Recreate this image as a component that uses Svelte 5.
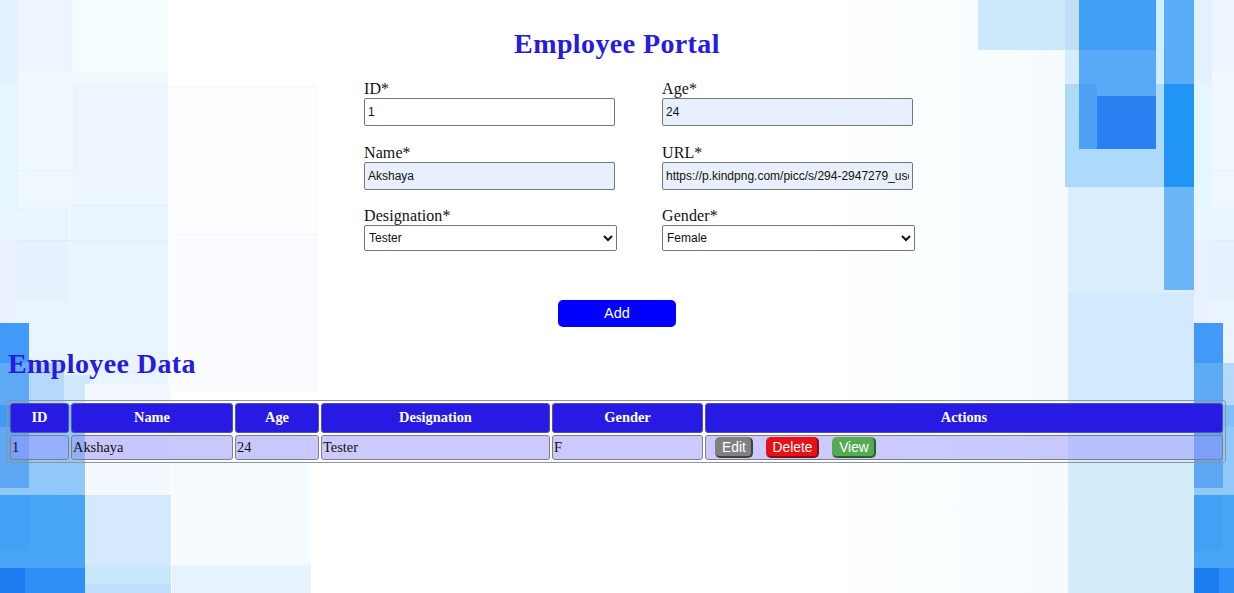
<script>
  const tile = [
    [0, 0, 18, 82, '#e3f1ff'], [18, 0, 54, 74, '#edf6ff'], [72, 0, 96, 72, '#f6fdff'],
    [18, 72, 150, 10, '#f3f7fe'], [72, 82, 96, 158, '#edf5ff'],
    [0, 82, 18, 125, '#e6f6ff'], [18, 82, 54, 125, '#eff8ff'],
    [0, 207, 72, 33, '#e9f5ff'], [0, 240, 168, 83, '#e9f4ff'], [14, 240, 51, 60, '#e5f2fe'],
    [72, 204, 96, 38, '#ebf5ff'], [0, 240, 14, 83, '#e9f0ff'],
    [0, 323, 168, 82, '#e9f4ff'],
    [168, 84, 148, 308, '#fcfdff'], [174, 234, 143, 158, '#fafcff'],
    [29, 363, 35, 42, '#b6d9fa'], [64, 375, 26, 30, '#cfe8fc'],
    [85, 384, 86, 111, '#f4f9ff'], [172, 405, 139, 160, '#f6fbff'],
    [29, 405, 56, 22, '#80bff8'], [29, 427, 56, 68, '#91c8fa'], [0, 488, 29, 7, '#91c8fa'],
    [0, 323, 29, 40, '#4399f8'], [0, 363, 29, 42, '#5faaf5'],
    [0, 405, 29, 22, '#439af3'], [0, 427, 29, 61, '#5ea8f3'],
    [0, 495, 85, 73, '#49a6f7'], [0, 495, 29, 56, '#43a0f5'],
    [0, 568, 85, 25, '#2e90f6'], [0, 568, 25, 25, '#1c7bf0'],
    [85, 495, 86, 70, '#d4e8fe'], [85, 565, 86, 19, '#c7e8fb'], [85, 584, 86, 9, '#bedffe'],
    [172, 565, 139, 28, '#e6f3fe'],
    [978, 0, 88, 50, '#cde8fa'], [1065, 0, 14, 50, '#c0dff5'], [1065, 50, 14, 34, '#d4ecfd'],
    [1155, 0, 9, 84, '#cfedfd'],
    [1065, 84, 99, 103, '#add9fb'], [1065, 84, 14, 31, '#addbf6'],
    [1079, 0, 77, 50, '#409ff5'], [1079, 50, 77, 99, '#59aaf6'], [1079, 84, 18, 65, '#4ea2f5'],
    [1097, 96, 59, 53, '#2b80f1'],
    [1068, 187, 126, 106, '#daeffd'], [1068, 293, 126, 107, '#d2e9fe'], [1068, 400, 126, 193, '#d5ecfb'],
    [1164, 0, 30, 84, '#59acf7'], [1164, 84, 30, 103, '#2095f5'], [1164, 187, 30, 103, '#6cb5f6']
  ];

  const seams = [
    'M168 87.500H316.500V234.500H174', 'M316.500 234V392H174', 'M17 170.500H75M17 209.500H66V300',
    'M17 240.500H168M72 205.500H168M75 82V170', 'M72 0V72', 'M32 370V400M64 405V568'
  ];

  let employee = $state({
    id: '1', age: '24', name: 'Akshaya',
    url: 'https://p.kindpng.com/picc/s/294-2947279_user-icon.png',
    designation: 'Tester', gender: 'Female'
  });
  const rows = [{ id: 1, name: 'Akshaya', age: 24, designation: 'Tester', gender: 'F' }];
</script>

<svg class="backdrop" width="1234" height="593" viewBox="0 0 1234 593" aria-hidden="true">
  <defs>
    <linearGradient id="fade" x1="0" x2="1">
      <stop offset="0" stop-color="#fff" />
      <stop offset="0.4" stop-color="#f8fdff" />
      <stop offset="1" stop-color="#f0f8ff" />
    </linearGradient>
    <g id="tile">
      <rect x="810" width="384" height="593" fill="url(#fade)" />
      {#each tile as [x, y, w, h, fill]}
        <rect {x} {y} width={w} height={h} {fill} />
      {/each}
      {#each seams as d}
        <path {d} fill="none" stroke="#9ec3dd" stroke-opacity="0.12" />
      {/each}
    </g>
  </defs>
  <use href="#tile" />
  <use href="#tile" x="1194" />
</svg>

<main>
  <h2 class="title">Employee Portal</h2>
  <form onsubmit={(e) => e.preventDefault()}>
    <div class="fields">
      <label>ID*<input class="plain" bind:value={employee.id} /></label>
      <label>Age*<input bind:value={employee.age} /></label>
      <label>Name*<input bind:value={employee.name} /></label>
      <label>URL*<input bind:value={employee.url} /></label>
      <label>Designation*
        <select bind:value={employee.designation}><option>Tester</option></select>
      </label>
      <label>Gender*
        <select bind:value={employee.gender}><option>Female</option></select>
      </label>
    </div>
    <button class="add">Add</button>
  </form>

  <h2 class="data">Employee Data</h2>
  <table>
    <colgroup>
      <col style:width="59px" /><col style:width="162px" /><col style:width="84px" />
      <col style:width="229px" /><col style:width="151px" /><col />
    </colgroup>
    <thead>
      <tr><th>ID</th><th>Name</th><th>Age</th><th>Designation</th><th>Gender</th><th>Actions</th></tr>
    </thead>
    <tbody>
      {#each rows as row}
        <tr>
          <td>{row.id}</td><td>{row.name}</td><td>{row.age}</td><td>{row.designation}</td><td>{row.gender}</td>
          <td>
            <div class="actions">
              <button class="edit">Edit</button>
              <button class="delete">Delete</button>
              <button class="view">View</button>
            </div>
          </td>
        </tr>
      {/each}
    </tbody>
  </table>
</main>

<style>
  :global(body) { background: #fff; }
  .backdrop { position: absolute; inset: 0; z-index: -1; }
  main {
    box-sizing: border-box;
    width: 1234px;
    height: 593px;
    padding: 28px 8px 0;
    font-family: "Liberation Serif", "Times New Roman", serif;
    font-size: 16px;
    color: #111;
  }
  h2 { margin: 0; font-size: 28px; line-height: 32px; letter-spacing: 0.400px; color: #271bdf; }
  .title { text-align: center; }
  form { display: flex; flex-direction: column; align-items: center; }
  .fields {
    display: grid;
    grid-template-columns: 253px 253px;
    column-gap: 45px;
    width: 551px;
    margin: 19.400px 0 0 45px;
  }
  label { display: block; height: 63.200px; line-height: 19px; letter-spacing: 0.100px; }
  input, select {
    display: block;
    box-sizing: border-box;
    border: 1px solid #767676;
    border-radius: 2px;
    background: #e8f0fe;
    color: #111;
    font: 12px "Liberation Sans", Arial, sans-serif;
  }
  input { width: 251px; height: 28px; padding: 1px 3px; }
  input.plain { background: #fff; }
  select { width: 253px; height: 26px; padding: 0; background: #fff; }
  .add {
    width: 118px;
    height: 27px;
    margin-top: 31px;
    padding: 0 0 1px;
    border: 0;
    border-radius: 5px;
    background: #00f;
    color: #fff;
    font: 14.500px "Liberation Sans", Arial, sans-serif;
  }
  .data { margin-top: 21px; }
  table {
    width: 1219px;
    margin: 20px 0 0 -1px;
    table-layout: fixed;
    border: 1px solid #909499;
    border-radius: 3px;
    border-spacing: 2px;
    font-size: 14.400px;
  }
  th, td { box-sizing: border-box; border: 1px solid #808080; border-radius: 3px; }
  th { height: 30px; padding: 0; background: #271be3; border-color: #5550b8; color: #fff; }
  td { height: 25px; padding: 0 1px; background: rgba(154, 150, 252, 0.5); }
  .actions { display: flex; gap: 13px; padding-left: 8px; }
  .actions button {
    box-sizing: border-box;
    height: 21px;
    padding: 1px 0 0 1px;
    border: 1px solid;
    border-right-width: 2px;
    border-bottom-width: 2px;
    border-radius: 5px;
    color: #fff;
    font: 13.800px/17px "Liberation Sans", Arial, sans-serif;
  }
  .actions .edit { width: 38px; background: #808080; border-color: #808080 #404040 #404040 #808080; }
  .actions .delete { width: 53px; background: #e81015; border-color: #e81015 #7a1418 #7a1418 #e81015; }
  .actions .view { width: 44px; background: #56aa56; border-color: #56aa56 #285f2a #285f2a #56aa56; }
</style>
